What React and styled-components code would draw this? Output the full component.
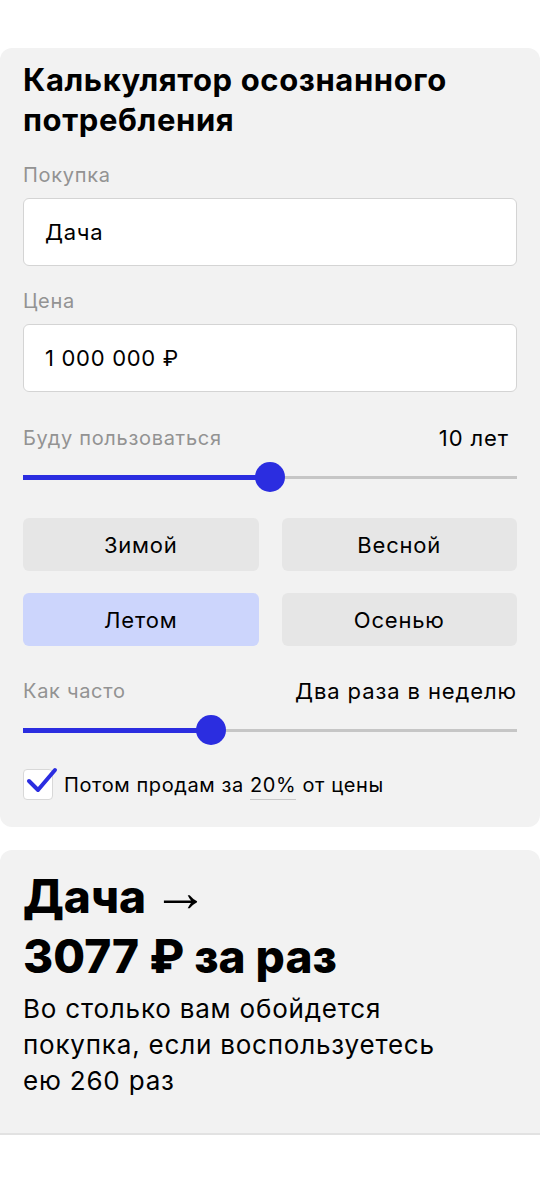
import React, { useState } from 'react';
import styled, { createGlobalStyle } from 'styled-components';

const GlobalStyle = createGlobalStyle`
    body {
        margin: 0;
        background: #ffffff;
        font-family: Inter, 'Noto Sans', sans-serif;
        color: #000000;
    }
`;

const Page = styled.div`
    width: 540px;
    padding-top: 48px;
`;

const Card = styled.div`
    background: #f2f2f2;
    border-radius: ${props => props.flatBottom ? '12px 12px 0 0' : '12px'};
    border-bottom: ${props => props.flatBottom ? '2px solid #e2e2e2' : 'none'};
    padding: ${props => props.flatBottom ? '16px 23px 34px' : '12px 23px 27px'};
    margin-bottom: 23px;
`;

const Title = styled.h1`
    margin: 0 0 22px;
    font-size: 31px;
    line-height: 40px;
    font-weight: 700;
    letter-spacing: 0.6px;
`;

const Label = styled.div`
    font-size: 20px;
    line-height: 26px;
    color: #939393;
    letter-spacing: 0.7px;
    margin-bottom: ${props => props.inRow ? 0 : 10}px;
`;

const LabelRow = styled.div`
    display: flex;
    justify-content: space-between;
    align-items: center;
    height: 28px;
    margin-top: ${props => props.top}px;
    margin-bottom: 8px;
`;

const Value = styled.div`
    font-size: 22px;
    line-height: 28px;
    letter-spacing: 0.9px;
    color: #000000;
    margin-right: ${props => props.inset || 0}px;
`;

const Input = styled.input`
    box-sizing: border-box;
    width: 100%;
    height: 68px;
    border: 1.5px solid #d4d4d4;
    border-radius: 6px;
    background: #ffffff;
    padding: 0 21px;
    font-family: inherit;
    font-size: 22px;
    letter-spacing: 0.7px;
    color: #000000;
    margin-bottom: 22px;
    outline: none;
`;

const SliderBox = styled.div`
    position: relative;
    height: 34px;
    margin-bottom: ${props => props.gap}px;
`;

const TrackBase = styled.div`
    position: absolute;
    left: 0;
    right: 0;
    top: 16px;
    height: 3px;
    background: #c6c6c6;
`;

const TrackFill = styled.div`
    position: absolute;
    left: 0;
    top: 15px;
    height: 5px;
    background: #2b2de0;
`;

const Thumb = styled.div`
    position: absolute;
    top: 2px;
    width: 30px;
    height: 30px;
    margin-left: -15px;
    border-radius: 50%;
    background: #2b2de0;
`;

function Slider({ value, gap }) {
    return (
        <SliderBox gap={gap}>
            <TrackBase />
            <TrackFill style={{ width: `${value * 100}%` }} />
            <Thumb style={{ left: `${value * 100}%` }} />
        </SliderBox>
    );
}

const Seasons = styled.div`
    display: grid;
    grid-template-columns: 1fr 1fr;
    gap: 22px 23px;
    margin-bottom: 31px;
`;

const Season = styled.button`
    height: 53px;
    border: none;
    border-radius: 6px;
    background: ${props => props.active ? '#ccd5fc' : '#e6e6e6'};
    font-family: inherit;
    font-size: 22px;
    letter-spacing: 0.8px;
    color: #000000;
    cursor: pointer;
`;

const CheckRow = styled.label`
    display: flex;
    align-items: center;
    gap: 11px;
    font-size: 20px;
    letter-spacing: 0.6px;
    color: #000000;
`;

const CheckBox = styled.span`
    position: relative;
    box-sizing: border-box;
    width: 30px;
    height: 31px;
    border: 1.5px solid #d8d8d8;
    border-radius: 4px;
    background: #ffffff;
    flex-shrink: 0;

    svg {
        position: absolute;
        left: 2px;
        top: -3px;
    }
`;

const Percent = styled.span`
    display: inline-block;
    border-bottom: 1.5px solid #c8c8c8;
    padding-bottom: 2px;
    margin-bottom: -4px;
`;

const Result = styled.div`
    font-size: 46px;
    line-height: 60px;
    font-weight: 800;
    letter-spacing: 0;
    margin-bottom: 5px;
`;

const Arrow = styled.span`
    font-family: 'Liberation Sans', sans-serif;
    font-weight: 700;
    font-size: 56px;
    line-height: 0;
    vertical-align: 2px;
    margin-left: -4px;
`;

const Note = styled.p`
    margin: 0;
    font-size: 26px;
    line-height: 36px;
    letter-spacing: 0.8px;
    max-width: 456px;
`;

const seasons = ['Зимой', 'Весной', 'Летом', 'Осенью'];

function App() {
    const [season, setSeason] = useState('Летом');
    const [name, setName] = useState('Дача');
    const [price, setPrice] = useState('1 000 000 ₽');

    return (
        <Page>
            <GlobalStyle />
            <Card>
                <Title>Калькулятор осознанного потребления</Title>

                <Label>Покупка</Label>
                <Input value={name} onChange={e => setName(e.target.value)} />

                <Label>Цена</Label>
                <Input value={price} onChange={e => setPrice(e.target.value)} />

                <LabelRow top={10}>
                    <Label inRow>Буду пользоваться</Label>
                    <Value inset={8}>10 лет</Value>
                </LabelRow>
                <Slider value={0.5} gap={24} />

                <Seasons>
                    {seasons.map(item => (
                        <Season key={item} active={item === season} onClick={() => setSeason(item)}>
                            {item}
                        </Season>
                    ))}
                </Seasons>

                <LabelRow top={0}>
                    <Label inRow>Как часто</Label>
                    <Value>Два раза в неделю</Value>
                </LabelRow>
                <Slider value={0.38} gap={22} />

                <CheckRow>
                    <CheckBox>
                        <svg width="32" height="28" viewBox="0 0 32 28">
                            <path d="M3 14 L12 23 L29 3" fill="none" stroke="#2b2de0" strokeWidth="4" strokeLinecap="round" strokeLinejoin="round" />
                        </svg>
                    </CheckBox>
                    <span>Потом продам за <Percent>20%</Percent> от цены</span>
                </CheckRow>
            </Card>

            <Card flatBottom>
                <Result>{name} <Arrow>→</Arrow><br />3077 ₽ за раз</Result>
                <Note>Во столько вам обойдется покупка, если воспользуетесь ею 260 раз</Note>
            </Card>
        </Page>
    );
}

export default App;
